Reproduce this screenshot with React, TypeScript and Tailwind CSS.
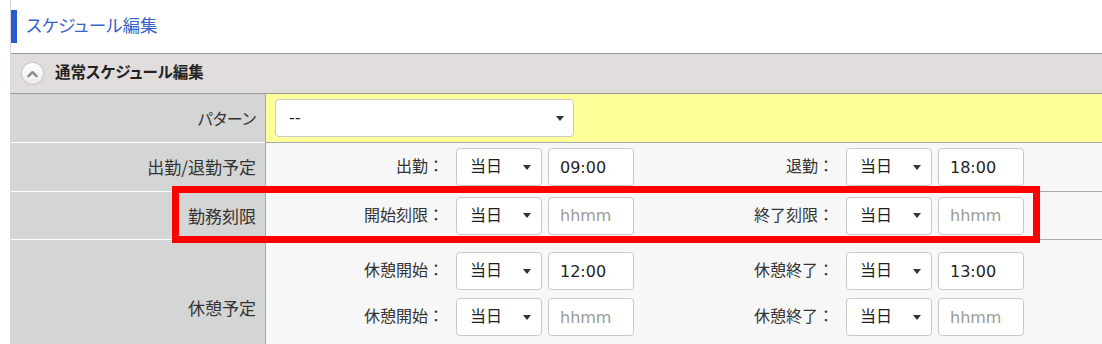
import React from "react";

const base = "font-['DejaVu_Sans','Noto_Sans_CJK_JP',sans-serif]";
const cjk = "font-['Noto_Sans_CJK_JP',sans-serif]";
const palt = "[font-feature-settings:'palt']";

const DaySelect = () => (
  <div className="flex h-[38px] w-[86px] shrink-0 items-center justify-between rounded-[4px] border border-[#c9c9c9] bg-white pl-[13px] pr-[10px] text-[16px] text-[#1f1f1f]">
    <span>当日</span>
    <span className="h-0 w-0 border-x-[4.5px] border-t-[5px] border-x-transparent border-t-[#333]" />
  </div>
);

const TimeInput = ({ value }: { value: string }) => (
  <input
    readOnly
    value={value}
    placeholder="hhmm"
    className="ml-[6px] h-[38px] w-[86px] shrink-0 rounded-[4px] border border-[#c9c9c9] bg-white px-[11px] text-[16px] text-[#1f1f1f] outline-none placeholder:text-[#9a9a9a]"
  />
);

const Field = ({ label, time }: { label: string; time: string }) => (
  <div className="flex items-center justify-end pr-[22px]">
    <span className="mr-[12px] text-[16px] text-[#333]">{label}：</span>
    <DaySelect />
    <TimeInput value={time} />
  </div>
);

const LabelCell = ({ children }: { children: React.ReactNode }) => (
  <div className={`flex items-center justify-end border-b border-white bg-[#d4d5d5] pr-[9px] text-[17px] text-[#333] ${cjk}`}>
    {children}
  </div>
);

export default function App() {
  return (
    <div className={`relative h-[344px] w-[1102px] overflow-hidden bg-white ${base}`}>
      <div className="ml-[10px] h-full border-l border-[#d6d6d6]">
        {/* page title */}
        <div className="h-[53px] pt-[10px]">
          <div className={`flex h-[33px] items-center border-l-[6px] border-[#2a5bd6] pl-[9px] text-[17.5px] text-[#3b63c9] ${palt}`}>
            スケジュール編集
          </div>
        </div>

        {/* section header */}
        <div className="flex h-[41px] items-center gap-[12px] border-y border-[#9a9a9a] bg-[#e1dddd] pl-[11px]">
          <div className="flex h-[21px] w-[21px] items-center justify-center rounded-full bg-gradient-to-b from-white to-[#ebebeb] shadow-[0_0_2px_rgba(0,0,0,0.35)]">
            <svg width="11" height="8" viewBox="0 0 11 8">
              <path d="M1.5 6.2 L5.5 2.2 L9.5 6.2" fill="none" stroke="#8a8a8a" strokeWidth="2.4" strokeLinecap="round" strokeLinejoin="round" />
            </svg>
          </div>
          <span className={`text-[15.5px] font-bold text-[#222] ${palt}`}>通常スケジュール編集</span>
        </div>

        {/* form table */}
        <div className="grid grid-cols-[254px_1fr] grid-rows-[49px_49px_48px_136px]">
          <LabelCell>
            <span className={`text-[16px] ${palt}`}>パターン</span>
          </LabelCell>
          <div className="flex items-center border-b border-l border-[#a9a9a9] bg-[#ffff99] pl-[9px]">
            <div className="flex h-[38px] w-[299px] items-center justify-between rounded-[4px] border border-[#c9c9c9] bg-white pl-[13px] pr-[9px] text-[16px] text-[#1f1f1f]">
              <span>--</span>
              <span className="h-0 w-0 border-x-[4.5px] border-t-[5px] border-x-transparent border-t-[#333]" />
            </div>
          </div>

          <LabelCell>出勤/退勤予定</LabelCell>
          <div className="grid grid-cols-[390px_390px] items-center border-b border-l border-[#a9a9a9] bg-[#f7f7f7]">
            <Field label="出勤" time="09:00" />
            <Field label="退勤" time="18:00" />
          </div>

          <LabelCell>勤務刻限</LabelCell>
          <div className="grid grid-cols-[390px_390px] items-center border-b border-l border-[#a9a9a9] bg-[#f7f7f7]">
            <Field label="開始刻限" time="" />
            <Field label="終了刻限" time="" />
          </div>

          <LabelCell>休憩予定</LabelCell>
          <div className="flex flex-col gap-[8px] border-l border-[#a9a9a9] bg-[#f7f7f7] pt-[12px]">
            <div className="grid grid-cols-[390px_390px]">
              <Field label="休憩開始" time="12:00" />
              <Field label="休憩終了" time="13:00" />
            </div>
            <div className="grid grid-cols-[390px_390px]">
              <Field label="休憩開始" time="" />
              <Field label="休憩終了" time="" />
            </div>
          </div>
        </div>
      </div>

      {/* highlight frame */}
      <div className="pointer-events-none absolute left-[172px] top-[186px] h-[57px] w-[868px] border-[7px] border-[#ff0000]" />
    </div>
  );
}
